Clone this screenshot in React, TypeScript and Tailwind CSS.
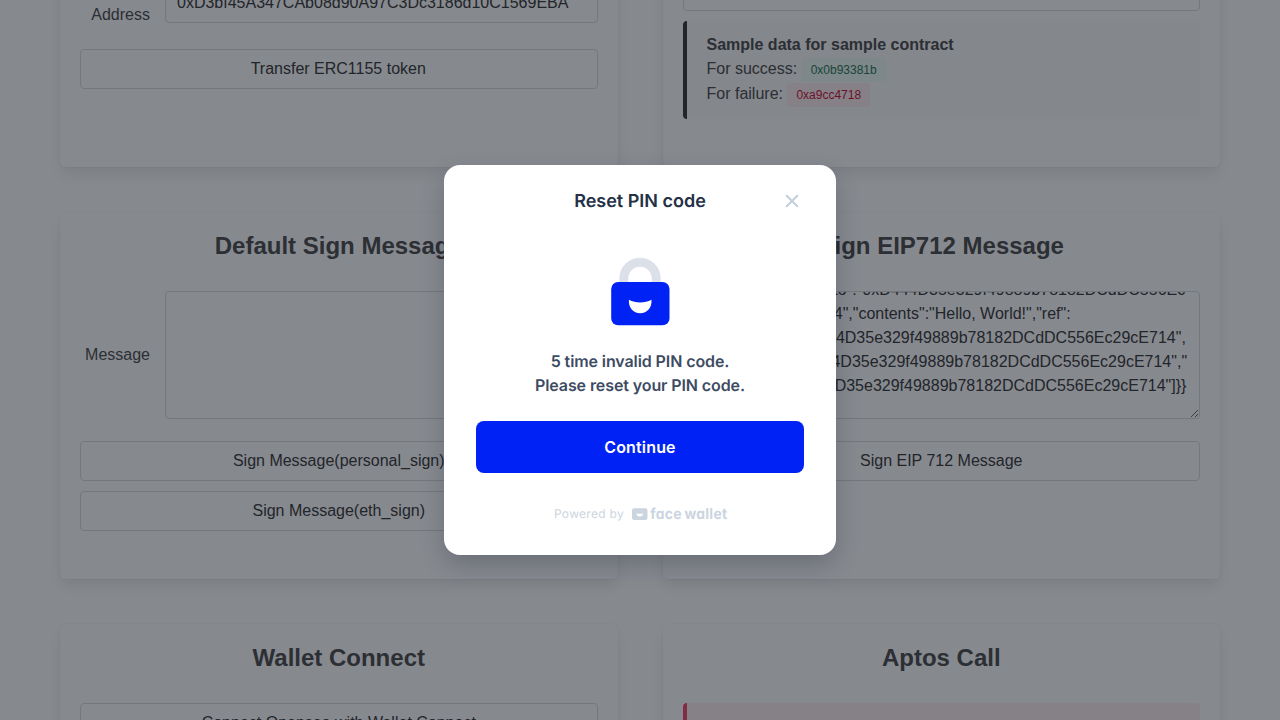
import type { ReactNode } from 'react';

function Card({ title, className = '', children }: { title?: string; className?: string; children: ReactNode }) {
  return (
    <section
      className={`rounded-md bg-white p-5 text-[#4a4a4a] shadow-[0_8px_16px_-2px_rgba(10,10,10,0.1),0_0_0_1px_rgba(10,10,10,0.02)] ${className}`}
    >
      {title && <h2 className="mb-8 text-center text-2xl/[27px] font-bold text-[#4a4a4a]">{title}</h2>}
      {children}
    </section>
  );
}

function Button({ children }: { children: ReactNode }) {
  return (
    <button className="flex h-10 w-full items-center justify-center rounded border border-[#dbdbdb] bg-white pb-px text-base text-[#363636]">
      {children}
    </button>
  );
}

function Tag({ className, children }: { className: string; children: ReactNode }) {
  return (
    <span className={`inline-flex h-6 items-center rounded px-[9px] text-xs leading-[18px] ${className}`}>{children}</span>
  );
}

function LockIcon() {
  return (
    <svg width="80" height="80" viewBox="0 0 80 80" fill="none">
      <path d="M23.8 38V28.4a16.2 16.2 0 0 1 32.4 0V38" stroke="#dce0e9" strokeWidth="9" />
      <rect x="11.2" y="32" width="58.3" height="43.2" rx="7" fill="#0022f5" />
      <path d="M28.9 49.7c6.8 3.6 15.8 3.6 22.6 0 .6 7.8-4.4 13.6-11.3 13.6s-11.9-5.8-11.3-13.6Z" fill="#fff" />
    </svg>
  );
}

function FaceWalletLogo() {
  return (
    <svg width="96" height="16" viewBox="0 0 96 16" fill="#cbd5e0">
      <path
        fillRule="evenodd"
        d="M2 2.300h11.500a2 2 0 0 1 2 2v7.700a2 2 0 0 1-2 2H2a2 2 0 0 1-2-2V4.300a2 2 0 0 1 2-2ZM4.500 7.200c.1 2 1.500 3.300 3.300 3.300s3.200-1.300 3.300-3.300c-2 .9-4.600.9-6.600 0Z"
      />
      <text
        x="18.300"
        y="13.300"
        textLength="77"
        lengthAdjust="spacingAndGlyphs"
        className="font-['Inter'] text-[15px] font-bold [font-feature-settings:'cv11'] [font-optical-sizing:none] [text-rendering:geometricPrecision] [word-spacing:-1px]"
      >
        face wallet
      </text>
    </svg>
  );
}

function Modal() {
  return (
    <div className="flex h-[390px] w-[392px] flex-col items-center rounded-2xl bg-white px-8 font-['Inter',sans-serif] shadow-[0_10px_24px_-2px_rgba(20,28,50,0.26)] [font-optical-sizing:none] [text-rendering:geometricPrecision]">
      <header className="grid h-[72px] w-full grid-cols-[24px_1fr_24px] items-center">
        <span />
        <h1 className="pt-0.5 text-center text-lg font-semibold text-[#243146]">Reset PIN code</h1>
        <svg width="24" height="24" viewBox="0 0 24 24" fill="none" stroke="#c3cfdb" strokeWidth="2" strokeLinecap="round">
          <path d="M6.7 6.7l10.6 10.6M17.3 6.7l-10.6 10.6" />
        </svg>
      </header>
      <div className="mt-[13px]">
        <LockIcon />
      </div>
      <p className="mt-[19px] text-center text-base font-semibold tracking-[-0.006em] text-[#3d4b63]">
        5 time invalid PIN code.
        <br />
        Please reset your PIN code.
      </p>
      <button className="mt-6 h-[52px] w-full rounded-lg bg-[#0022f5] text-base font-semibold tracking-[0.01em] text-white">
        Continue
      </button>
      <footer className="mt-[33px] flex items-center gap-2 pl-[2px] text-xs tracking-[0.3px] text-[#cbd5e0]">
        <span>Powered by</span>
        <FaceWalletLogo />
      </footer>
    </div>
  );
}

export default function App() {
  return (
    <div className="relative h-[720px] w-[1280px] overflow-hidden bg-white font-['Liberation_Sans',Arial,sans-serif] text-base">
      <main className="-mt-[37px] grid grid-cols-2 grid-rows-[204px_367px_240px] gap-[45px] px-[60px]">
        <Card>
          <div className="flex h-10">
            <span className="mr-[15px] w-[70px] pt-5 text-right">Address</span>
            <div className="flex h-10 flex-1 items-center rounded border border-[#dbdbdb] px-[11px] text-[#363636]">
              0xD3bf45A347CAb08d90A97C3Dc3186d10C1569EBA
            </div>
          </div>
          <div className="mt-[26px]">
            <Button>
              <span className="pr-px">Transfer ERC1155 token</span>
            </Button>
          </div>
        </Card>

        <Card>
          <div className="h-7 rounded border border-[#dbdbdb]" />
          <div className="mt-2.5 h-[98px] rounded border-l-4 border-[#363636] bg-[#fafafa] px-5 py-[11.5px]">
            <div className="font-bold leading-6 text-[#4a4a4a]">Sample data for sample contract</div>
            <div className="flex h-[25px] items-start gap-[4.45px]">
              <span>For success:</span>
              <Tag className="mt-px bg-[#effaf5] text-[#257953]">0x0b93381b</Tag>
            </div>
            <div className="flex h-[25px] items-start gap-[4.45px]">
              <span>For failure:</span>
              <Tag className="mt-px bg-[#feecf0] text-[#cc0f35]">0xa9cc4718</Tag>
            </div>
          </div>
        </Card>

        <Card title="Default Sign Message">
          <div className="flex items-center">
            <span className="mr-[15px] w-[70px] text-right">Message</span>
            <div className="h-32 flex-1 rounded border border-[#dbdbdb]" />
          </div>
          <div className="mt-[22px] flex flex-col gap-2.5">
            <Button>Sign Message(personal_sign)</Button>
            <Button>Sign Message(eth_sign)</Button>
          </div>
        </Card>

        <Card title="Sign EIP712 Message">
          <div className="flex items-center">
            <span className="mr-[15px] w-[70px] text-right">Message</span>
            <div className="h-32 flex-1 resize-y overflow-hidden whitespace-nowrap rounded border border-[#dbdbdb] pl-[11px] leading-6 text-[#363636]">
              <div className="-mt-[14px] pl-12">"to":"0xD444D35e329f49889b78182DCdDC556Ec</div>
              <div>29cE714","contents":"Hello, World!","ref":</div>
              <div>["0xD444D35e329f49889b78182DCdDC556Ec29cE714",</div>
              <div>"0xD444D35e329f49889b78182DCdDC556Ec29cE714","</div>
              <div>0xD444D35e329f49889b78182DCdDC556Ec29cE714"]{'}}'}</div>
            </div>
          </div>
          <div className="mt-[22px]">
            <Button>Sign EIP 712 Message</Button>
          </div>
        </Card>

        <Card title="Wallet Connect">
          <Button>Connect Opensea with Wallet Connect</Button>
        </Card>

        <Card title="Aptos Call">
          <div className="h-24 rounded border-l-4 border-[#f14668] bg-[#feecf0]" />
        </Card>
      </main>

      <div className="absolute inset-0 flex items-center justify-center bg-[rgba(13,20,30,0.5)]">
        <Modal />
      </div>
    </div>
  );
}
